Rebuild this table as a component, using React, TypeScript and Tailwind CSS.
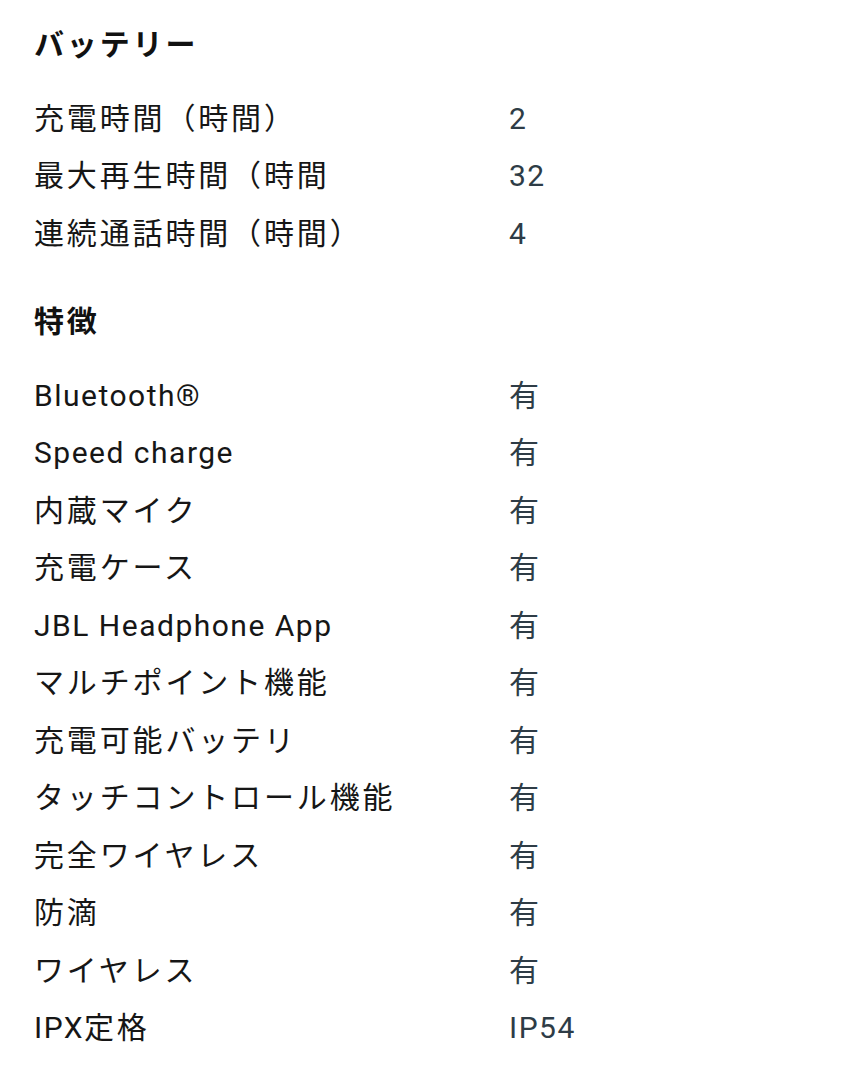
const battery: [string, string][] = [
  ["充電時間（時間）", "2"],
  ["最大再生時間（時間", "32"],
  ["連続通話時間（時間）", "4"],
];

const features: [string, string][] = [
  ["Bluetooth®", "有"],
  ["Speed charge", "有"],
  ["内蔵マイク", "有"],
  ["充電ケース", "有"],
  ["JBL Headphone App", "有"],
  ["マルチポイント機能", "有"],
  ["充電可能バッテリ", "有"],
  ["タッチコントロール機能", "有"],
  ["完全ワイヤレス", "有"],
  ["防滴", "有"],
  ["ワイヤレス", "有"],
  ["IPX定格", "IP54"],
];

// japanese glyphs in the screenshot run a bit wider than latin ones
function Spaced({ text }: { text: string }) {
  const parts = text.split(/([\u3000-\u9fff\uff00-\uffef]+)/).filter(Boolean);
  return (
    <>
      {parts.map((p, i) =>
        /[\u3000-\u9fff\uff00-\uffef]/.test(p) ? (
          <span key={i} className="tracking-[0.095em]">{p}</span>
        ) : (
          <span key={i} className="tracking-[0.05em]">{p}</span>
        )
      )}
    </>
  );
}

function SpecSection({ title, rows, className }: { title: string; rows: [string, string][]; className?: string }) {
  return (
    <section className={className}>
      <h2 className="text-[30px] font-bold leading-[57.5px] text-[#111] mb-[16px]">
        <Spaced text={title} />
      </h2>
      <dl>
        {rows.map(([label, value]) => (
          <div key={label} className="flex leading-[57.5px] text-[30px]">
            <dt className="w-[475px] text-[#161616]">
              <Spaced text={label} />
            </dt>
            <dd className="text-[#2e3c46]">
              <Spaced text={value} />
            </dd>
          </div>
        ))}
      </dl>
    </section>
  );
}

export default function App() {
  return (
    <div
      className="min-h-screen bg-white px-[34px] pt-[16px]"
      style={{ fontFamily: 'Roboto, "Noto Sans CJK JP", sans-serif' }}
    >
      <SpecSection title="バッテリー" rows={battery} />
      <SpecSection title="特徴" rows={features} className="mt-[31px]" />
    </div>
  );
}
